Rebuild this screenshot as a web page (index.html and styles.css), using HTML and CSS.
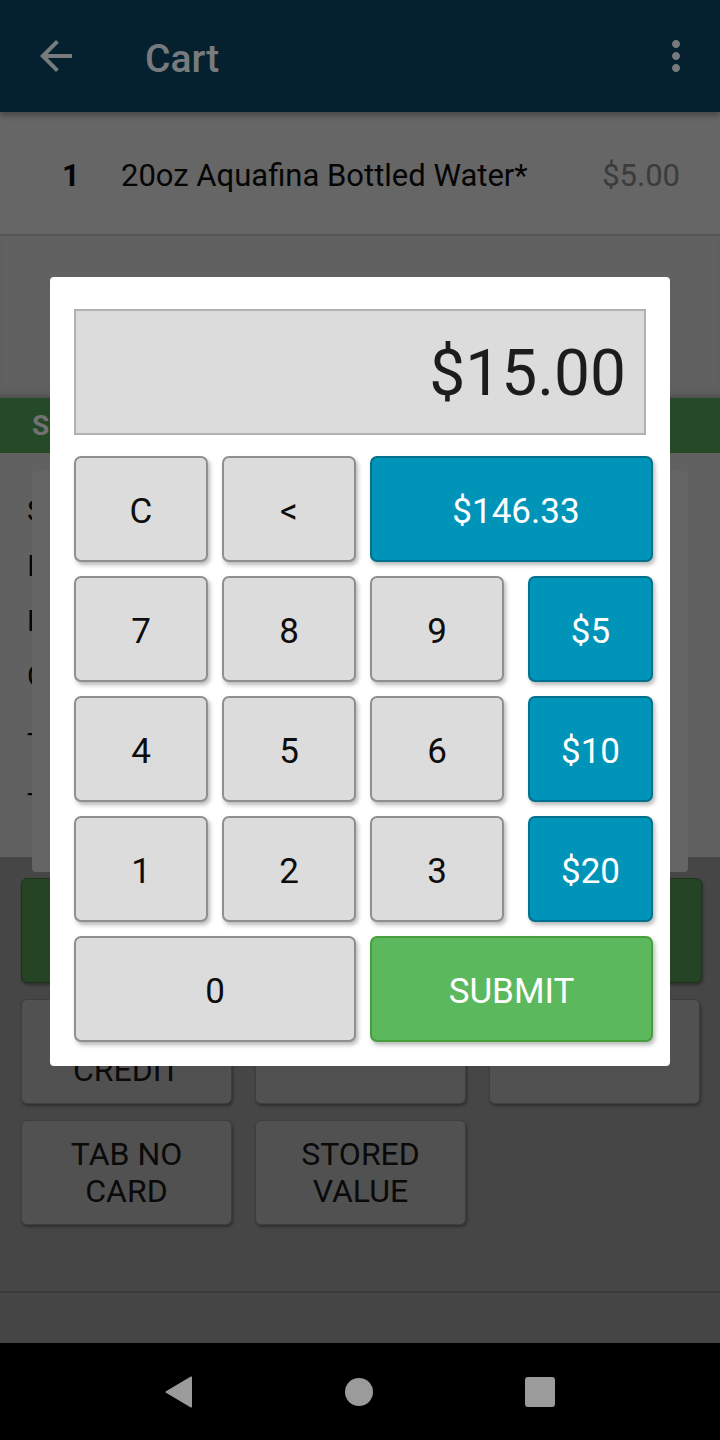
FILE: index.html
```html
<!DOCTYPE html>
<html lang="en">
<head>
    <meta charset="UTF-8">
    <meta name="viewport" content="width=device-width, initial-scale=1.0">
    <title>Cart</title>
    <link rel="stylesheet" href="styles.css">
</head>
<body>
    <div class="screen">
        <header class="appbar">
            <svg class="appbar-icon" viewBox="0 0 24 24"><path d="M20 11H7.83l5.59-5.59L12 4l-8 8 8 8 1.41-1.41L7.83 13H20v-2z"/></svg>
            <span class="appbar-title">Cart</span>
            <svg class="appbar-icon menu" viewBox="0 0 24 24"><path d="M12 8c1.1 0 2-.9 2-2s-.9-2-2-2-2 .9-2 2 .9 2 2 2zm0 2c-1.1 0-2 .9-2 2s.9 2 2 2 2-.9 2-2-.9-2-2-2zm0 6c-1.1 0-2 .9-2 2s.9 2 2 2 2-.9 2-2-.9-2-2-2z"/></svg>
        </header>

        <div class="cart-list">
            <div class="cart-item">
                <span class="qty">1</span>
                <span class="item-name">20oz Aquafina Bottled Water*</span>
                <span class="item-price">$5.00</span>
            </div>
        </div>

        <div class="summary-bar">SUMMARY</div>

        <div class="summary">
            <div class="summary-row">Sales</div>
            <div class="summary-row">Items</div>
            <div class="summary-row">Fees</div>
            <div class="summary-row">Credit</div>
            <div class="summary-totals">
                <div class="summary-row tall">Tax</div>
                <div class="summary-row tall">Total</div>
            </div>
            <div class="summary-card"></div>
        </div>

        <div class="payments">
            <div class="pay-btn cash">CASH</div>
            <div class="pay-btn">STORE<br>CREDIT</div>
            <div class="pay-btn">CHECK</div>
            <div class="pay-btn">GIFT</div>
            <div class="pay-btn">TAB NO<br>CARD</div>
            <div class="pay-btn">STORED<br>VALUE</div>
        </div>

        <div class="footer"></div>

        <nav class="navbar">
            <svg class="nav-icon" viewBox="0 0 28 32"><path d="M27 1.5v29a1 1 0 0 1-1.6.8L1 16.8a1 1 0 0 1 0-1.6L25.4.7A1 1 0 0 1 27 1.5z"/></svg>
            <span class="nav-home"></span>
            <span class="nav-recent"></span>
        </nav>

        <div class="scrim">
            <div class="dialog">
                <div class="display">$15.00</div>
                <div class="keypad">
                    <div class="key">C</div>
                    <div class="key">&lt;</div>
                    <div class="key blue wide balance">$146.33</div>
                    <div class="key">7</div>
                    <div class="key">8</div>
                    <div class="key">9</div>
                    <div class="key blue quick">$5</div>
                    <div class="key">4</div>
                    <div class="key">5</div>
                    <div class="key">6</div>
                    <div class="key blue quick">$10</div>
                    <div class="key">1</div>
                    <div class="key">2</div>
                    <div class="key">3</div>
                    <div class="key blue quick">$20</div>
                    <div class="key zero">0</div>
                    <div class="key green wide">SUBMIT</div>
                </div>
            </div>
        </div>
    </div>
</body>
</html>
```

FILE: styles.css
```css
body {
    margin: 0;
    font-family: Roboto, "Noto Sans", sans-serif;
    background: #000;
}
.screen {
    position: relative;
    width: 720px;
    height: 1440px;
    overflow: hidden;
    display: flex;
    flex-direction: column;
    background: #616161;
}

/* app bar */
.appbar {
    height: 112px;
    flex-shrink: 0;
    display: flex;
    align-items: center;
    padding: 0 20px 0 32px;
    background: #05212f;
    box-shadow: 0 3px 6px rgba(0, 0, 0, 0.35);
    position: relative;
    z-index: 2;
}
.appbar-icon {
    width: 48px;
    height: 48px;
    fill: #777b7d;
}
.appbar-title {
    margin: 6px 0 0 65px;
    flex: 1;
    font-size: 39px;
    font-weight: 500;
    color: #777b7d;
}

/* cart */
.cart-list {
    height: 286px;
    flex-shrink: 0;
    background: #616161;
    box-shadow: inset 0 -8px 8px -6px rgba(0, 0, 0, 0.25);
}
.cart-item {
    height: 124px;
    box-sizing: border-box;
    padding: 4px 40px 0 62px;
    display: flex;
    align-items: center;
    background: #666666;
    border-bottom: 2px solid #555555;
    font-size: 31px;
    color: #050505;
}
.qty {
    font-weight: 700;
    width: 59px;
}
.item-name {
    flex: 1;
}
.item-price {
    color: #3b3b3b;
}

.summary-bar {
    height: 55px;
    flex-shrink: 0;
    display: flex;
    align-items: center;
    padding-left: 32px;
    background: #264a27;
    color: #727272;
    font-size: 28px;
    font-weight: 700;
}

/* summary rows sit under a raised sheet, only their first letters peek out */
.summary {
    position: relative;
    z-index: 1;
    height: 404px;
    flex-shrink: 0;
    padding: 30px 0 0 27px;
    box-sizing: border-box;
}
.summary-row {
    height: 55px;
    display: flex;
    align-items: center;
    font-size: 30px;
    color: #050505;
}
.summary-totals {
    margin-top: 10px;
}
.summary-row.tall {
    height: 60px;
}
.summary-card {
    position: absolute;
    top: 18px;
    left: 32px;
    width: 656px;
    height: 401px;
    background: #656565;
    border-radius: 4px;
}

/* payment buttons */
.payments {
    flex: 1;
    display: grid;
    grid-template-columns: repeat(3, 211px);
    grid-auto-rows: 105px;
    column-gap: 23px;
    row-gap: 16px;
    align-content: start;
    padding: 21px 20px 0 21px;
    background: #464646;
}
.pay-btn {
    display: flex;
    align-items: center;
    justify-content: center;
    text-align: center;
    background: #515151;
    border: 1px solid #3e3e3e;
    border-radius: 6px;
    box-shadow: 1px 2px 3px rgba(0, 0, 0, 0.35);
    font-size: 32px;
    line-height: 37px;
    color: #0a0a0a;
}
.pay-btn.cash {
    grid-column: 1 / 4;
    margin-right: -2px;
    background: #244424;
    border-color: #1b341b;
}

.footer {
    height: 50px;
    flex-shrink: 0;
    background: #454545;
    border-top: 2px solid #3b3b3b;
}

.navbar {
    height: 97px;
    flex-shrink: 0;
    display: flex;
    align-items: center;
    justify-content: center;
    gap: 152px;
    background: #000;
}
.nav-icon {
    width: 28px;
    height: 32px;
    fill: #9b9b9b;
}
.nav-home {
    width: 28px;
    height: 28px;
    border-radius: 50%;
    background: #9b9b9b;
}
.nav-recent {
    width: 30px;
    height: 30px;
    border-radius: 3px;
    background: #9b9b9b;
}

/* dialog */
.scrim {
    position: absolute;
    top: 0;
    left: 0;
    right: 0;
    bottom: 97px;
    display: flex;
    align-items: center;
    justify-content: center;
    z-index: 5;
}
.dialog {
    width: 620px;
    box-sizing: border-box;
    padding: 32px 17px 24px 24px;
    background: #fff;
    border-radius: 4px;
}
.display {
    height: 126px;
    box-sizing: border-box;
    margin: 0 7px 21px 0;
    padding: 3px 18px 0 0;
    display: flex;
    align-items: center;
    justify-content: flex-end;
    background: #dcdcdc;
    border: 2px solid #b1b1b1;
    font-size: 64px;
    color: #1c1c1c;
}
.keypad {
    display: grid;
    grid-template-columns: 134px 134px 134px 135px;
    grid-auto-rows: 106px;
    gap: 14px;
}
.key {
    display: flex;
    align-items: center;
    justify-content: center;
    padding-top: 4px;
    background: #dcdcdc;
    border: 2px solid #8f8f8f;
    border-radius: 7px;
    box-shadow: 2px 3px 4px rgba(0, 0, 0, 0.28);
    font-size: 35px;
    color: #0d0d0d;
}
.key.blue {
    background: #0094b9;
    border-color: #00718d;
    color: #fff;
}
.key.green {
    background: #5cb85c;
    border-color: #479e3f;
    color: #fff;
}
.key.wide {
    grid-column: 3 / 5;
}
.key.balance {
    padding-left: 9px;
}
.key.zero {
    grid-column: 1 / 3;
}
.key.quick {
    margin-left: 10px;
}
```
